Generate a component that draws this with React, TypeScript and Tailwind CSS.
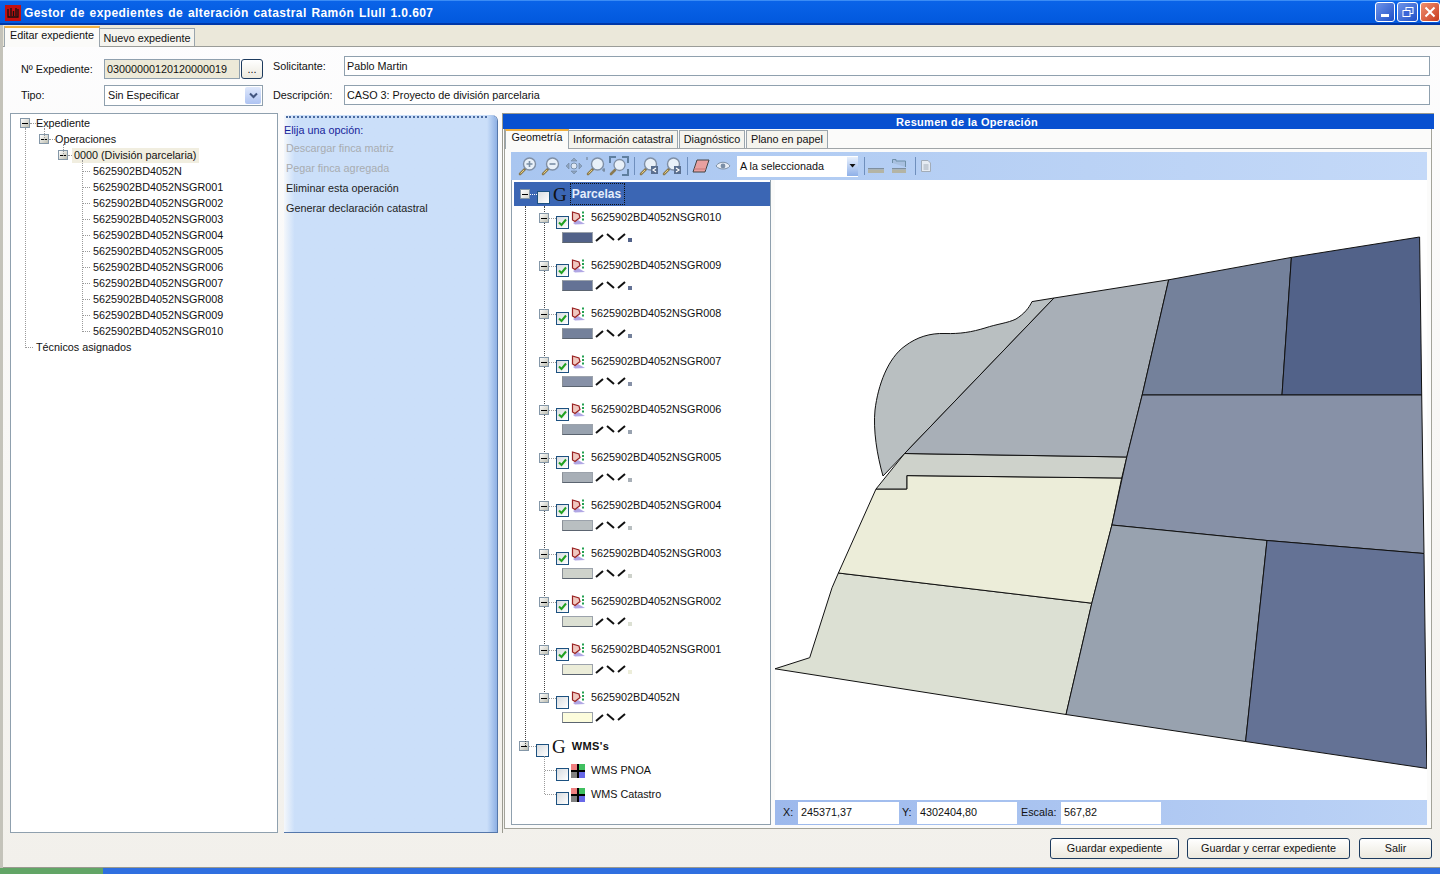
import React from "react";

const parcels = ["N","NSGR001","NSGR002","NSGR003","NSGR004","NSGR005","NSGR006","NSGR007","NSGR008","NSGR009","NSGR010"];
const layers: [string, string, boolean][] = [
  ["NSGR010", "#526289", true],
  ["NSGR009", "#647295", true],
  ["NSGR008", "#74819b", true],
  ["NSGR007", "#8791a7", true],
  ["NSGR006", "#98a2af", true],
  ["NSGR005", "#a8afb7", true],
  ["NSGR004", "#b9bfc1", true],
  ["NSGR003", "#ced2cb", true],
  ["NSGR002", "#dce0d3", true],
  ["NSGR001", "#ecedd9", true],
  ["N", "#fcfcdc", false],
];

function Minus({ light = false }: { light?: boolean }) {
  return (
    <span className={`flex h-[10px] w-[10px] shrink-0 items-center justify-center border border-[#8497a8] bg-linear-to-br ${light ? "from-white to-[#d8d8d0]" : "from-white to-[#bdbdb0]"}`}>
      <span className="h-px w-[6px] bg-black" />
    </span>
  );
}

function Check({ on = false }: { on?: boolean }) {
  return (
    <span className="flex h-[13px] w-[13px] shrink-0 items-center justify-center border border-[#1c5180] bg-linear-to-br from-[#d8dce0] to-white">
      {on && (
        <svg width="9" height="9" viewBox="0 0 9 9">
          <path d="M1 4.5 L3.5 7 L8 1.5" fill="none" stroke="#21a121" strokeWidth="2" />
        </svg>
      )}
    </span>
  );
}

function LayerIcon() {
  return (
    <svg width="15" height="14" viewBox="0 0 15 14" className="shrink-0">
      <path d="M2 12 L7 9 L14 13 L4 13.5 Z" fill="#8f80d8" opacity="0.7" />
      <path d="M1.5 1 L8 3 L9 6.5 L4 10.5 L1.5 9 Z" fill="#f0c8c0" stroke="#982020" strokeWidth="1.2" />
      <rect x="11" y="0.5" width="2" height="2" fill="#22a050" />
      <rect x="11" y="4" width="2" height="2" fill="#22a050" />
      <rect x="11" y="7.5" width="2" height="2" fill="#22a050" />
    </svg>
  );
}

function WmsIcon() {
  return (
    <svg width="14" height="14" viewBox="0 0 14 14" className="shrink-0">
      <rect width="7" height="7" fill="#f08080" />
      <rect x="7" width="7" height="7" fill="#40c060" />
      <rect y="7" width="7" height="7" fill="#808080" />
      <rect x="7" y="7" width="7" height="7" fill="#6868e8" />
      <rect x="6" width="2" height="14" fill="#000" />
      <rect y="6" width="14" height="2" fill="#000" />
    </svg>
  );
}

function Lens({ extra }: { extra?: React.ReactNode }) {
  return (
    <svg width="20" height="20" viewBox="0 0 20 20" className="shrink-0">
      <path d="M2 18 L7 13" stroke="#8a7a50" strokeWidth="2.6" strokeLinecap="round" />
      <path d="M2.5 17.5 L6 14" stroke="#e8d080" strokeWidth="1" />
      <circle cx="11.5" cy="8" r="6" fill="#e8f0f8" stroke="#7f8fa5" strokeWidth="1.4" />
      {extra}
    </svg>
  );
}

function Sep() {
  return <span className="block h-[18px] w-px shrink-0 bg-[#6f8fbd]" />;
}

function TopButton({ children, className }: { children: React.ReactNode; className: string }) {
  return (
    <span className={`flex h-[20px] items-center justify-center rounded-[3px] border border-white ${className}`}>{children}</span>
  );
}

function Field({ children, className = "" }: { children: React.ReactNode; className?: string }) {
  return (
    <div className={`flex h-[20px] items-center border border-[#8fa0ae] bg-white px-[2px] ${className}`}>{children}</div>
  );
}

function Btn({ children, className }: { children: React.ReactNode; className: string }) {
  return (
    <button className={`h-[21px] rounded-[3px] border border-[#1c3a5e] bg-linear-to-b from-white to-[#ece9de] text-[10.8px] text-[#111] ${className}`}>{children}</button>
  );
}

function StatusInput({ label, value, lw, w }: { label: string; value: string; lw: string; w: string }) {
  return (
    <>
      <span className={`shrink-0 ${lw}`}>{label}</span>
      <span className={`flex h-[22px] items-center bg-white pl-[3px] ${w}`}>{value}</span>
    </>
  );
}

function MapView() {
  return (
    <svg viewBox="775 180 652 620" width="652" height="620" className="block">
      <g stroke="#111" strokeWidth="1" strokeLinejoin="round">
        <path fill="#dce0d3" d="M775 668.8 L809.7 657.7 L832 587.8 L838.4 573 L1091.8 603.2 L1066 714.5 Z" />
        <path fill="#ecedd9" d="M838.4 573 L876 489 L906.8 489 L906.8 475.6 L1121.7 478 L1111.9 525 L1091.8 603.2 Z" />
        <path fill="#ced2cb" d="M876 489 L904.6 453.5 L1126.8 457 L1121.7 478 L906.8 475.6 L906.8 489 Z" />
        <path fill="#b9bfc1" d="M883 476 C877 455 873 430 875 410 C878 385 888 358 905 346 C917 337 930 333 945 333.5 C960 334 972 332 985 328 C997 324 1008 323 1016 319 C1024 314 1029 308 1032 301.6 L1054 298 L904.6 453.5 Z" />
        <path fill="#a8afb7" d="M904.6 453.5 L1054 298 L1168.7 279.8 L1142.2 395 L1126.8 457 Z" />
        <path fill="#74819b" d="M1168.7 279.8 L1291.4 257.4 L1282 395 L1142.2 395 Z" />
        <path fill="#526289" d="M1291.4 257.4 L1419.6 237 L1421.7 395 L1282 395 Z" />
        <path fill="#8791a7" d="M1142.2 395 L1421.7 395 L1424 553.5 L1267 540.5 L1111.9 525 L1126.8 457 Z" />
        <path fill="#98a2af" d="M1111.9 525 L1267 540.5 L1245.6 741.5 L1066 714.5 L1091.8 603.2 Z" />
        <path fill="#647295" d="M1267 540.5 L1424 553.5 L1426.8 768.4 L1245.6 741.5 Z" />
      </g>
    </svg>
  );
}

export default function App() {
  return (
    <div className="flex h-[874px] w-[1440px] flex-col overflow-hidden bg-white text-[10.8px] text-[#111] [font-family:'Liberation_Sans',sans-serif]">
      {/* title bar */}
      <div className="flex h-[25px] shrink-0 items-center border-t border-b-2 border-t-[#3b8cf5] border-b-[#0038a8] bg-linear-to-b from-[#0a63e8] to-[#0258dd] pl-[5px] pt-[2px]">
        <svg width="16" height="16" viewBox="0 0 16 16" className="shrink-0">
          <rect width="16" height="16" fill="#c01010" />
          <path d="M3 4 V12 H13 V4 M6 3 V11 M8.5 6 V11 M11 3 V11" stroke="#111" strokeWidth="1.3" fill="none" />
        </svg>
        <span className="ml-[3px] text-[12px] font-bold tracking-[0.42px] text-white [word-spacing:1px]">Gestor de expedientes de alteración catastral Ramón Llull 1.0.607</span>
        <div className="ml-auto -mt-[3px] flex items-center gap-[2px]">
          <TopButton className="w-[20px] bg-linear-to-br from-[#6f93e8] to-[#1f4fc8]">
            <span className="mt-[8px] h-[3px] w-[8px] bg-white" />
          </TopButton>
          <TopButton className="w-[21px] bg-linear-to-br from-[#6f93e8] to-[#1f4fc8]">
            <svg width="12" height="12" viewBox="0 0 12 12">
              <rect x="4" y="1.5" width="7" height="6" fill="none" stroke="#fff" strokeWidth="1" />
              <rect x="1" y="4.5" width="7" height="6" fill="#3a66d8" stroke="#fff" strokeWidth="1" />
            </svg>
          </TopButton>
          <TopButton className="w-[20px] bg-linear-to-br from-[#ee8f6f] to-[#c8381a]">
            <svg width="12" height="12" viewBox="0 0 12 12">
              <path d="M1.5 1.5 L10.5 10.5 M10.5 1.5 L1.5 10.5" stroke="#fff" strokeWidth="2" />
            </svg>
          </TopButton>
        </div>
      </div>

      <div className="flex min-h-0 flex-1 flex-col border-l-[3px] border-l-[#c4c3ba] bg-linear-to-b from-[#fdfdfe] to-[#f2f0eb]">
        {/* tab row */}
        <div className="flex h-[22px] shrink-0 items-end border-b border-[#9a9c98] bg-[#ebe8da] pl-[1px]">
          <div className="-mb-px h-[21px] w-[96px] border-x border-t-2 border-x-[#9aa5ad] border-t-[#f0b040] bg-[#fbfbf9] text-center leading-[15px] text-[#111]">Editar expediente</div>
          <div className="flex h-[18px] w-[95px] items-center justify-center border-r border-t border-[#9aa5ad] bg-[#f5f4ee] pt-[1px]">Nuevo expediente</div>
        </div>

        {/* form */}
        <div className="flex h-[66px] shrink-0">
          <div className="ml-[18px] flex w-[242px] shrink-0 flex-col gap-[6px] pt-[12px]">
            <div className="flex items-center">
              <span className="w-[83px]">Nº Expediente:</span>
              <Field className="w-[136px] !bg-[#ece9d8]">03000000120120000019</Field>
              <button className="ml-[1px] h-[20px] w-[22px] rounded-[3px] border border-[#1c3a5e] bg-linear-to-b from-white to-[#ece9de] leading-[18px]">...</button>
            </div>
            <div className="flex items-center">
              <span className="w-[83px]">Tipo:</span>
              <Field className="h-[21px] w-[159px] justify-between !pr-px pl-[3px]">
                <span>Sin Especificar</span>
                <span className="flex h-[17px] w-[16px] items-center justify-center rounded-[2px] bg-linear-to-b from-[#dfe8fb] to-[#aec3f2]">
                  <svg width="9" height="7" viewBox="0 0 9 7"><path d="M1 1.5 L4.5 5 L8 1.5" fill="none" stroke="#42557f" strokeWidth="2" /></svg>
                </span>
              </Field>
            </div>
          </div>
          <div className="ml-[10px] flex flex-1 flex-col gap-[9px] pr-[10px] pt-[9px]">
            <div className="flex items-center">
              <span className="w-[71px] shrink-0">Solicitante:</span>
              <Field className="flex-1">Pablo Martin</Field>
            </div>
            <div className="flex items-center">
              <span className="w-[71px] shrink-0">Descripción:</span>
              <Field className="flex-1">CASO 3: Proyecto de división parcelaria</Field>
            </div>
          </div>
        </div>

        {/* main */}
        <div className="flex h-[720px] shrink-0 pl-[7px]">
          {/* tree */}
          <div className="relative h-[720px] w-[268px] shrink-0 border border-[#8fa0ae] bg-white pt-[1px]">
            <span className="absolute left-[14px] top-[14px] h-[220px] border-l border-dotted border-[#9a9a9a]" />
            <span className="absolute left-[33px] top-[14px] h-[12px] border-l border-dotted border-[#9a9a9a]" />
            <span className="absolute left-[52px] top-[30px] h-[12px] border-l border-dotted border-[#9a9a9a]" />
            <span className="absolute left-[71px] top-[46px] h-[172px] border-l border-dotted border-[#9a9a9a]" />
            <div className="flex h-[16px] items-center pl-[9px]"><Minus /><span className="w-[6px] border-t border-dotted border-[#9a9a9a]" /><span>Expediente</span></div>
            <div className="flex h-[16px] items-center pl-[28px]"><Minus /><span className="w-[6px] border-t border-dotted border-[#9a9a9a]" /><span>Operaciones</span></div>
            <div className="flex h-[16px] items-center pl-[47px]"><Minus /><span className="w-[4px] border-t border-dotted border-[#9a9a9a]" /><span className="bg-[#f1eee0] pl-[2px] pr-[3px] leading-[15px]">0000 (División parcelaria)</span></div>
            {parcels.map((p) => (
              <div key={p} className="flex h-[16px] items-center pl-[71px]">
                <span className="mr-[3px] w-[8px] border-t border-dotted border-[#9a9a9a]" />
                <span>5625902BD4052{p}</span>
              </div>
            ))}
            <div className="flex h-[16px] items-center pl-[14px]">
              <span className="mr-[3px] w-[8px] border-t border-dotted border-[#9a9a9a]" />
              <span>Técnicos asignados</span>
            </div>
          </div>

          {/* task pane */}
          <div className="ml-[6px] mt-[2px] flex h-[718px] w-[214px] shrink-0 flex-col rounded-tr-[6px] border-b border-r border-b-[#5577aa] border-r-[#5577aa] bg-linear-to-r from-[#f4f7fb] from-0% via-[#cbdff9] via-[5%] to-[#cbdff9] to-100%">
            <div className="relative flex h-full flex-col">
              <span className="absolute inset-y-0 right-0 w-[10px] rounded-tr-[6px] bg-linear-to-r from-[#cbdff9] to-[#8eb0e4]" />
              <div className="mx-[2px] mt-[1px] border-t-2 border-dotted border-[#4a6aa0]" />
              <div className="relative flex flex-col">
                <span className="mt-[5px] flex h-[14px] items-center text-[#17249a]">Elija una opción:</span>
                <span className="mt-[3px] flex h-[16px] items-center pl-[2px] text-[#a8acb0]">Descargar finca matriz</span>
                <span className="mt-[4px] flex h-[16px] items-center pl-[2px] text-[#a8acb0]">Pegar finca agregada</span>
                <span className="mt-[4px] flex h-[16px] items-center pl-[2px] text-[#222]">Eliminar esta operación</span>
                <span className="mt-[4px] flex h-[16px] items-center pl-[2px] text-[#222]">Generar declaración catastral</span>
              </div>
            </div>
          </div>

          {/* right panel */}
          <div className="ml-[4px] flex h-[720px] w-[932px] shrink-0 flex-col border-l border-t border-[#9a9a90]">
            <div className="flex h-[15px] shrink-0 items-center justify-center bg-[#0850d0] pr-[3px] pt-[1px] text-[11px] font-bold tracking-[0.3px] text-white">Resumen de la Operación</div>
            <div className="ml-px mr-[2px] mb-[4px] flex min-h-0 flex-1 flex-col border-x border-b border-[#a3a39a] bg-[#fbfbfa]">
              <div className="flex h-[20px] shrink-0 items-end border-b border-[#a0a5a8]">
                <div className="-mb-px h-[20px] w-[64px] border-x border-t-2 border-x-[#9aa5ad] border-t-[#f0b040] bg-[#fbfbf9] text-center leading-[13px]">Geometría</div>
                <div className="flex h-[18px] w-[109px] items-center justify-center border-r border-t border-[#9aa5ad] bg-[#f5f4ee]">Información catastral</div>
                <div className="ml-px flex h-[18px] w-[66px] items-center justify-center border-x border-t border-[#9aa5ad] bg-[#f5f4ee]">Diagnóstico</div>
                <div className="ml-px flex h-[18px] w-[82px] items-center justify-center border-x border-t border-[#9aa5ad] bg-[#f5f4ee]">Plano en papel</div>
              </div>
              <div className="flex min-h-0 flex-1 flex-col pl-[6px] pr-[4px] pt-[3px]">
                {/* toolbar */}
                <div className="flex h-[28px] w-[916px] shrink-0 items-center bg-linear-to-r from-[#a9c6f0] to-[#c4d9f8] pl-[7px]">
                  <Lens extra={<path d="M8.5 8 H14.5 M11.5 5 V11" stroke="#7a8fa5" strokeWidth="1.6" />} />
                  <span className="ml-[3px]" />
                  <Lens extra={<path d="M8.5 8 H14.5" stroke="#7a8fa5" strokeWidth="1.6" />} />
                  <svg width="18" height="18" viewBox="0 0 18 18" className="ml-[4px] shrink-0">
                    <circle cx="9" cy="9" r="3" fill="#dfe8f4" stroke="#7a90aa" />
                    <path d="M9 1 L12 4 H6 Z M9 17 L12 14 H6 Z M1 9 L4 6 V12 Z M17 9 L14 6 V12 Z" fill="#8fa5bf" stroke="#6f859f" strokeWidth="0.6" />
                  </svg>
                  <span className="ml-[3px]" />
                  <Lens extra={<path d="M1 1 V4 M16 14 H19 M18 12 V16" stroke="#6a7a8a" strokeWidth="1" />} />
                  <span className="ml-[3px]" />
                  <svg width="20" height="20" viewBox="0 0 20 20" className="shrink-0">
                    <path d="M1 7 V1 H7 M13 1 H19 V7 M19 13 V19 H13" fill="none" stroke="#5f7f9f" strokeWidth="2" />
                    <path d="M2 18 L6 14" stroke="#8a7a50" strokeWidth="2.6" strokeLinecap="round" />
                    <circle cx="10.5" cy="9" r="5.5" fill="#e8f0f8" stroke="#7f8fa5" strokeWidth="1.3" />
                  </svg>
                  <span className="ml-[5px]"><Sep /></span>
                  <span className="ml-[4px]" />
                  <Lens extra={<g><rect x="12" y="10" width="7" height="8" fill="#5a6f8f" /><path d="M17 12 L14 14 L17 16" fill="none" stroke="#fff" strokeWidth="1.2" /></g>} />
                  <span className="ml-[3px]" />
                  <Lens extra={<g><rect x="12" y="10" width="7" height="8" fill="#5a6f8f" /><path d="M14 12 L17 14 L14 16" fill="none" stroke="#fff" strokeWidth="1.2" /></g>} />
                  <span className="ml-[5px]"><Sep /></span>
                  <svg width="18" height="14" viewBox="0 0 18 14" className="ml-[4px] shrink-0">
                    <path d="M5 1 H17 L13 13 H1 Z" fill="#e8a0a0" stroke="#444" strokeWidth="1" strokeLinejoin="round" />
                    <path d="M2 10 H14" stroke="#c87878" strokeWidth="1" />
                  </svg>
                  <svg width="16" height="10" viewBox="0 0 16 10" className="ml-[5px] shrink-0">
                    <path d="M1 5 C4 0 12 0 15 5 C12 9 4 9 1 5 Z" fill="#e8eef6" stroke="#7f92a8" />
                    <circle cx="8" cy="5" r="2.4" fill="#7a8ea6" />
                  </svg>
                  <div className="ml-[6px] flex h-[21px] w-[121px] shrink-0 items-center justify-between bg-white pl-[3px]">
                    <span>A la seleccionada</span>
                    <span className="flex h-[19px] w-[11px] items-center justify-center bg-linear-to-b from-[#e8f0fc] to-[#8fb0e8]">
                      <svg width="7" height="4" viewBox="0 0 7 4"><path d="M0.5 0 H6.5 L3.5 3.5 Z" fill="#111" /></svg>
                    </span>
                  </div>
                  <span className="ml-[6px]"><Sep /></span>
                  <svg width="16" height="16" viewBox="0 0 16 16" className="ml-[3px] shrink-0">
                    <rect x="0" y="10" width="16" height="1.4" fill="#7f8f9f" />
                    <rect x="0" y="11.5" width="16" height="3.5" fill="#b4b4a4" />
                  </svg>
                  <svg width="16" height="16" viewBox="0 0 16 16" className="ml-[7px] shrink-0">
                    <path d="M1.5 5 V1.5 H5 V3 H14.5 V9" fill="#a8c0e0" stroke="#6f8fa8" />
                    <rect x="1" y="10" width="14" height="1.4" fill="#7f8f9f" />
                    <rect x="1" y="11.5" width="14" height="3.5" fill="#b4b4a4" />
                  </svg>
                  <span className="ml-[8px]"><Sep /></span>
                  <svg width="12" height="14" viewBox="0 0 12 14" className="ml-[4px] shrink-0">
                    <path d="M1.5 1.5 H8 L10.5 4 V12.5 H1.5 Z" fill="#e6ebf2" stroke="#a2acb8" />
                    <path d="M3.5 6 H8.5 M3.5 8 H8.5 M3.5 10 H8.5" stroke="#a2acb8" />
                  </svg>
                </div>

                {/* content */}
                <div className="flex h-[645px] w-[916px] shrink-0">
                  <div className="relative h-[645px] w-[260px] shrink-0 border border-t-0 border-[#8fa0ae] bg-white pl-[1px]">
                    <span className="absolute left-[13px] top-[26px] h-[540px] border-l border-dotted border-[#444]" />
                    <span className="absolute left-[32px] top-[26px] h-[492px] border-l border-dotted border-[#444]" />
                    <span className="absolute left-[32px] top-[576px] h-[38px] border-l border-dotted border-[#9a9a9a]" />
                    {/* root */}
                    <div className="relative ml-px mt-[2px] flex h-[24px] w-[256px] items-center bg-[#3b66b4] pl-[6px]">
                      <Minus light />
                      <span className="w-[7px] border-t border-dotted border-white" />
                      <span className="mt-[6px]"><Check /></span>
                      <span className="ml-[3px] text-[19px] leading-none text-[#111] [font-family:'Liberation_Serif',serif]">G</span>
                      <span className="ml-[3px] flex h-[22px] items-center border border-dotted border-[#111] pb-px pl-px pr-[3px] text-[12px] font-bold text-[#e6eefb]">Parcelas</span>
                    </div>
                    {layers.map(([s, c, on]) => (
                      <div key={s} className="relative h-[48px]">
                        <div className="flex h-[24px] items-start pl-[26px] pt-[6px]">
                          <span className="mt-[1px]"><Minus /></span>
                          <span className="mt-[6px] w-[7px] border-t border-dotted border-[#9a9a9a]" />
                          <span className="mt-[4px]"><Check on={on} /></span>
                          <span className="ml-[2px] -mt-[1px]"><LayerIcon /></span>
                          <span className="ml-[5px] -mt-[2px] leading-[14px]">5625902BD4052{s}</span>
                        </div>
                        <div className="flex items-center pl-[49px] pt-[2px]">
                          <span className="h-[11px] w-[31px] border border-[#9ca3ac] border-b-[#5b6470] border-l-[#8a8f96]" style={{ backgroundColor: c }} />
                          <svg width="42" height="11" viewBox="0 0 42 11" className="ml-[1px]">
                            <path d="M2 9 L9 3 M13 2 L20 8 M24 8 L31 2" stroke="#111" strokeWidth="2" fill="none" />
                            {s !== "N" && <rect x="34" y="6" width="4" height="4" fill={c} />}
                          </svg>
                        </div>
                      </div>
                    ))}
                    <div className="flex h-[24px] items-center pl-[6px]">
                      <Minus />
                      <span className="w-[7px] border-t border-dotted border-[#9a9a9a]" />
                      <span className="mt-[8px]"><Check /></span>
                      <span className="ml-[3px] text-[19px] leading-none text-[#111] [font-family:'Liberation_Serif',serif]">G</span>
                      <span className="ml-[6px] text-[11px] font-bold tracking-[0.4px]">WMS's</span>
                    </div>
                    {["WMS PNOA", "WMS Catastro"].map((t) => (
                      <div key={t} className="flex h-[24px] items-center pl-[32px] pt-px">
                        <span className="w-[11px] border-t border-dotted border-[#9a9a9a]" />
                        <span className="mt-[8px]"><Check /></span>
                        <span className="ml-[2px]"><WmsIcon /></span>
                        <span className="ml-[6px]">{t}</span>
                      </div>
                    ))}
                  </div>
                  <div className="ml-[4px] flex min-w-0 flex-1 flex-col">
                    <div className="h-[620px] shrink-0 overflow-hidden bg-white"><MapView /></div>
                    <div className="flex h-[25px] shrink-0 items-center bg-linear-to-r from-[#9db9ec] to-[#bcd3f6] pl-[8px]">
                      <StatusInput label="X:" value="245371,37" lw="w-[15px]" w="w-[101px]" />
                      <span className="w-[3px]" />
                      <StatusInput label="Y:" value="4302404,80" lw="w-[15px]" w="w-[100px]" />
                      <span className="w-[4px]" />
                      <StatusInput label="Escala:" value="567,82" lw="w-[40px]" w="w-[100px]" />
                    </div>
                  </div>
                </div>
              </div>
            </div>
          </div>
        </div>

        {/* footer */}
        <div className="flex flex-1 items-start justify-end gap-[8px] border-b border-[#9a9a90] pr-[8px] pt-[5px]">
          <Btn className="w-[129px]">Guardar expediente</Btn>
          <Btn className="w-[163px]">Guardar y cerrar expediente</Btn>
          <Btn className="ml-px w-[73px]">Salir</Btn>
        </div>
      </div>

      {/* taskbar */}
      <div className="flex h-[6px] shrink-0 bg-[#2f6fe0]">
        <span className="w-[103px] bg-[#62a566]" />
      </div>
    </div>
  );
}
